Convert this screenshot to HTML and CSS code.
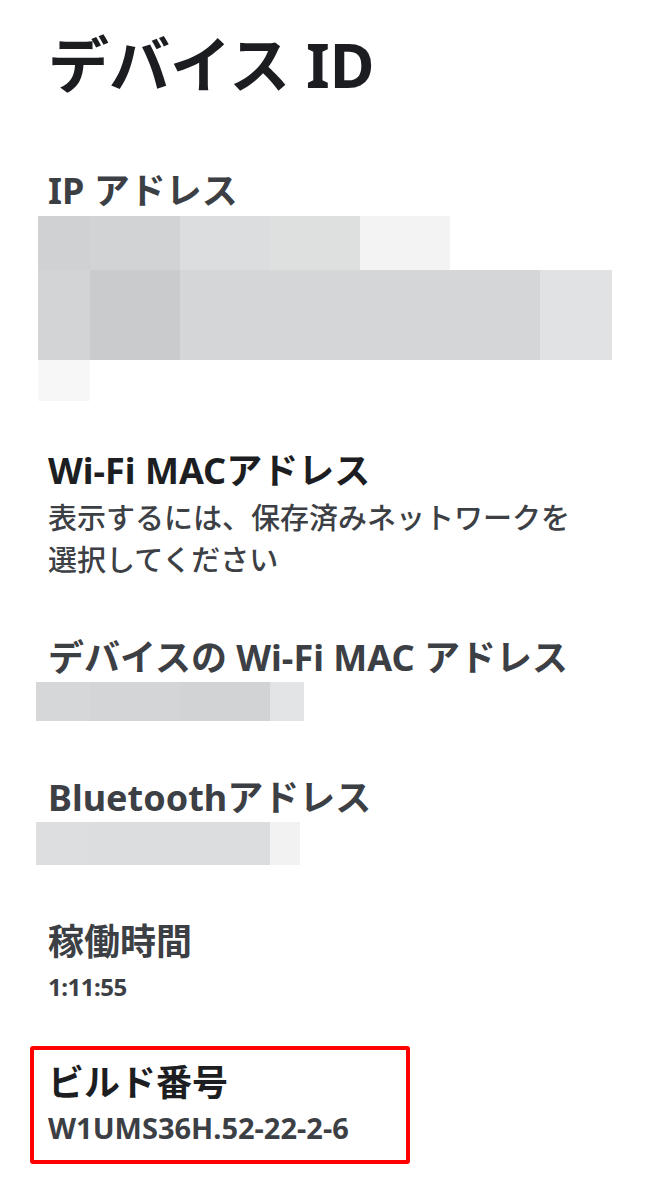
FILE: index.html
```html
<!DOCTYPE html>
<html lang="ja">
  <head>
    <meta charset="UTF-8" />
    <meta name="viewport" content="width=device-width, initial-scale=1.0" />
    <title>デバイス ID</title>
    <link rel="stylesheet" href="styles.css">
  </head>
  <body>
    <div class="page">
      <h1 class="title">デバイス ID</h1>

      <div class="item item-first">
        <h2 class="label">IP アドレス</h2>
        <div class="mosaic">
          <div class="mosaic-row row-s">
            <span style="width:52px;background:#d0d1d3"></span>
            <span style="width:90px;background:#d2d3d5"></span>
            <span style="width:90px;background:#dcdddf"></span>
            <span style="width:90px;background:#dedfdf"></span>
            <span style="width:90px;background:#f2f3f2"></span>
          </div>
          <div class="mosaic-row row-l">
            <span style="width:52px;background:#d3d4d6"></span>
            <span style="width:90px;background:#cacbcd"></span>
            <span style="width:360px;background:#d5d6d8"></span>
            <span style="width:72px;background:#e1e2e4"></span>
          </div>
          <div class="mosaic-row row-xs">
            <span style="width:52px;background:#f6f7f6"></span>
          </div>
        </div>
      </div>

      <div class="item item-wifi">
        <h2 class="label label-dark">Wi-Fi MACアドレス</h2>
        <p class="note">表示するには、保存済みネットワークを<br>選択してください</p>
      </div>

      <div class="item">
        <h2 class="label">デバイスの Wi-Fi MAC アドレス</h2>
        <div class="mosaic mosaic-short">
          <div class="mosaic-row row-m">
            <span style="width:54px;background:#d6d7d9"></span>
            <span style="width:90px;background:#d4d5d7"></span>
            <span style="width:90px;background:#d2d3d5"></span>
            <span style="width:34px;background:#e3e4e6"></span>
          </div>
        </div>
      </div>

      <div class="item">
        <h2 class="label">Bluetoothアドレス</h2>
        <div class="mosaic mosaic-short">
          <div class="mosaic-row row-b">
            <span style="width:54px;background:#dddee0"></span>
            <span style="width:90px;background:#dcdddf"></span>
            <span style="width:90px;background:#dcdddf"></span>
            <span style="width:30px;background:#f2f2f2"></span>
          </div>
        </div>
      </div>

      <div class="item">
        <h2 class="label">稼働時間</h2>
        <p class="value value-small">1:11:55</p>
      </div>

      <div class="item highlight">
        <h2 class="label label-dark">ビルド番号</h2>
        <p class="value">W1UMS36H.52-22-2-6</p>
      </div>
    </div>
  </body>
</html>
```

FILE: styles.css
```css
body {
  margin: 0;
  background: #ffffff;
  font-family: 'Noto Sans', 'Noto Sans CJK JP', sans-serif;
  color: #3c4045;
}

.page {
  padding: 29px 0 40px 48px;
}

.title {
  margin: 0;
  font-size: 61px;
  line-height: 72px;
  font-weight: 700;
  color: #1b1d21;
}

.item {
  margin-top: 55px;
}

.item-first {
  margin-top: 68px;
}

.item-wifi {
  margin-top: 48px;
}

.label {
  margin: 0;
  font-size: 36px;
  line-height: 44px;
  font-weight: 700;
  color: #3c4045;
}

.label-dark {
  color: #1c1e22;
}

.note {
  margin: 4px 0 0;
  font-size: 29px;
  line-height: 42px;
  font-weight: 500;
  color: #3c4045;
}

.value {
  margin: 5px 0 0;
  font-size: 29px;
  line-height: 36px;
  font-weight: 700;
  color: #3c4045;
}

.value-small {
  margin-top: 8px;
  font-size: 24px;
  line-height: 30px;
  letter-spacing: -0.5px;
}

/* pixelated (blurred) address values */
.mosaic {
  margin: 3px 0 0 -10px;
}

.mosaic-short {
  margin-top: 2px;
  margin-left: -12px;
}

.mosaic-row {
  display: flex;
}

.mosaic-row span {
  display: block;
  height: 100%;
}

.row-s {
  height: 54px;
}

.row-l {
  height: 90px;
}

.row-xs {
  height: 41px;
}

.row-m {
  height: 39px;
}

.row-b {
  height: 43px;
}

.highlight {
  margin: 44px 0 0 -18px;
  width: 380px;
  box-sizing: border-box;
  padding: 11px 14px 14px;
  border: 4px solid #ff0000;
  border-radius: 3px;
}
```
